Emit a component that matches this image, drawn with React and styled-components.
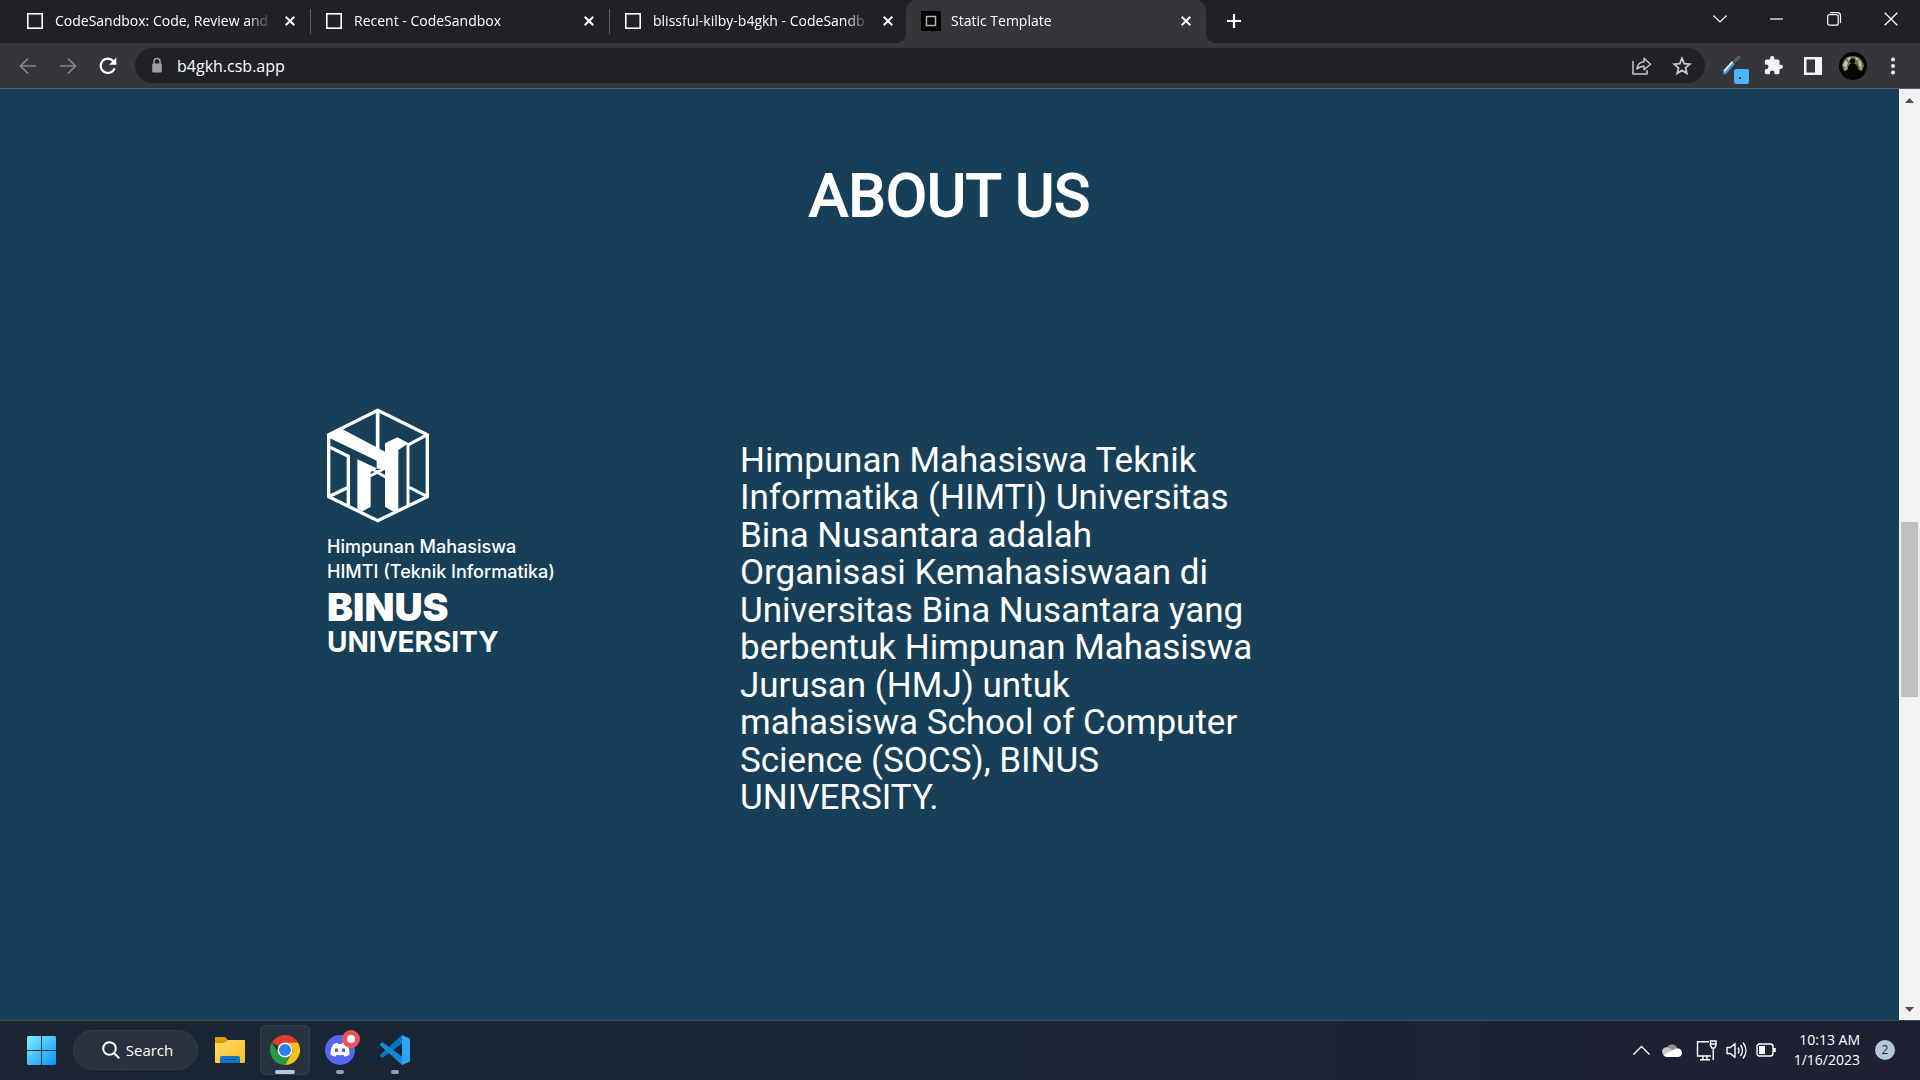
import React from "react";
import styled, { createGlobalStyle } from "styled-components";

const ui = `"Open Sans", "Noto Sans", sans-serif`;

const Global = createGlobalStyle`
  * { box-sizing: border-box; }
  body { margin: 0; overflow: hidden; background: #174058; }
  button { border: 0; padding: 0; background: none; color: inherit; font: inherit; }
  svg { display: block; flex: none; overflow: visible; }
`;

const Screen = styled.div`
  display: flex;
  flex-direction: column;
  height: 100vh;
  color: #fff;
  font-family: ${ui};
`;

/* ---------- browser frame ---------- */

const TabStrip = styled.header`
  display: flex;
  height: 43px;
  padding: 0 1px 0 12px;
  background: #202124;
`;

const Tabs = styled.nav`
  display: flex;
`;

const Tab = styled.div`
  position: relative;
  display: flex;
  align-items: center;
  gap: ${(p) => (p.$active ? "10px" : "12px")};
  width: ${(p) => (p.$active ? "300px" : "298px")};
  margin-left: ${(p) => (p.$active ? "-2px" : "0")};
  padding: 0 14px 2px 15px;
  border-radius: 10px 10px 0 0;
  background: ${(p) => (p.$active ? "#35363a" : "transparent")};

  &::before, &::after {
    content: "";
    display: ${(p) => (p.$active ? "block" : "none")};
    position: absolute;
    bottom: 0;
    width: 10px;
    height: 10px;
  }
  &::before { left: -10px; background: radial-gradient(circle at 0 0, transparent 10px, #35363a 10px); }
  &::after { right: -10px; background: radial-gradient(circle at 100% 0, transparent 10px, #35363a 10px); }
`;

const TabDivider = styled.i`
  width: 1px;
  height: 25px;
  margin-top: 9px;
  background: #5f6064;
`;

const TabLabel = styled.button`
  flex: 1;
  min-width: 0;
  white-space: nowrap;
  text-align: left;
  font-size: 14px;
  line-height: 20px;
  mask-image: linear-gradient(to left, transparent 0, #000 24px);
`;

const IconButton = styled.button`
  display: flex;
  flex: none;
  align-items: center;
  justify-content: center;
  width: ${(p) => p.$w || 40}px;
  height: ${(p) => p.$h || 40}px;
  color: ${(p) => p.$color || "#fff"};
`;

const WindowControls = styled.div`
  display: flex;
  margin-left: auto;
`;

const Toolbar = styled.div`
  display: flex;
  align-items: center;
  height: 46px;
  padding: 0 7px 0 8px;
  background: #35363a;
  border-bottom: 1px solid #5c5d61;
`;

const AddressBar = styled.form`
  display: flex;
  flex: 1;
  align-items: center;
  height: 35px;
  margin: 0 8px 0 7px;
  padding: 0 3px 0 14px;
  border-radius: 18px;
  background: #202124;
`;

const AddressInput = styled.input`
  flex: 1;
  min-width: 0;
  margin-left: 12px;
  padding: 0;
  border: 0;
  outline: 0;
  background: none;
  color: #fff;
  font: 16px/24px ${ui};
`;

const Viewport = styled.div`
  display: flex;
  flex: 1;
  min-height: 0;
`;

const ScrollTrack = styled.div`
  display: flex;
  flex-direction: column;
  align-items: center;
  width: 21px;
  background: #f1f1f1;
`;

const ScrollSpace = styled.span`
  flex: ${(p) => p.$grow};
`;

const ScrollThumb = styled.span`
  width: 17px;
  height: 175px;
  background: #c1c1c1;
`;

/* ---------- page ---------- */

const Page = styled.main`
  display: flex;
  flex: 1;
  flex-direction: column;
  background: #174058;
  font-family: Roboto, sans-serif;
`;

const Title = styled.h1`
  margin: 69px 0 0;
  text-align: center;
  font-size: 60px;
  line-height: 75px;
  font-weight: 400;
  -webkit-text-stroke: 2px #fff;
`;

const About = styled.section`
  display: flex;
  align-items: flex-start;
  margin-top: 175px;
  padding-left: 327px;
`;

const LogoBlock = styled.figure`
  display: flex;
  flex-direction: column;
  width: 413px;
  margin: 0;
  font-family: Inter, sans-serif;
`;

const LogoLine = styled.span`
  margin-top: ${(p) => p.$gap || 0}px;
  font-size: ${(p) => p.$size}px;
  line-height: ${(p) => p.$line}px;
  font-weight: ${(p) => p.$weight || 400};
`;

const Description = styled.p`
  width: 514px;
  margin: 34px 0 0;
  font-size: 35px;
  line-height: 1.07;
`;

/* ---------- taskbar ---------- */

const Taskbar = styled.footer`
  display: flex;
  align-items: center;
  height: 60px;
  padding: 0 25px 1px 14px;
  border-top: 1px solid #41474f;
  background: linear-gradient(90deg, #1c2433 0%, #182534 16%, #1a2536 50%, #1d2134 80%, #1e2133 100%);
`;

const SearchButton = styled.button`
  display: flex;
  align-items: center;
  justify-content: center;
  gap: 6px;
  width: 125px;
  height: 40px;
  margin: 0 7px 0 4px;
  padding-left: 4px;
  border: 1px solid #333c48;
  border-radius: 20px;
  background: #29313d;
  font-size: 15px;
`;

const AppButton = styled.button`
  position: relative;
  display: flex;
  align-items: center;
  justify-content: center;
  width: 50px;
  height: 50px;
  margin-right: 5px;
  border-radius: 5px;
  border: 1px solid ${(p) => (p.$active ? "#343f4c" : "transparent")};
  background: ${(p) => (p.$active ? "#27323f" : "transparent")};

  &::after {
    content: "";
    position: absolute;
    bottom: 0;
    width: ${(p) => (p.$active ? 20 : p.$open ? 8 : 0)}px;
    height: 4px;
    border-radius: 2px;
    background: ${(p) => (p.$active ? "#b3c8dd" : "#9a9da2")};
  }
`;

const Tray = styled.div`
  display: flex;
  align-items: center;
  margin-left: auto;
`;

const TrayGroup = styled.div`
  display: flex;
  margin-left: 5px;
`;

const Clock = styled.button`
  margin: 0 15px 0 12px;
  text-align: right;
  font-size: 14px;
  line-height: 20px;
`;

const Count = styled.span`
  width: 20px;
  height: 20px;
  border-radius: 50%;
  background: #b4c8dc;
  color: #1d2134;
  text-align: center;
  font-size: 12px;
  line-height: 20px;
`;

/* ---------- icons ---------- */

const Line = ({ w, h = w, sw = 1.5, children, ...rest }) => (
  <svg width={w} height={h} viewBox={`0 0 ${w} ${h}`} fill="none" stroke="currentColor" strokeWidth={sw} {...rest}>
    {children}
  </svg>
);

const BoxFavicon = () => (
  <Line w={16} sw={1.6}><rect x="0.8" y="0.8" width="14.4" height="14.4" /></Line>
);

const TemplateFavicon = () => (
  <svg width="20" height="20">
    <rect width="20" height="20" fill="#000" />
    <rect x="5.5" y="5.5" width="9" height="9" fill="none" stroke="#b5b5b5" strokeWidth="1.5" />
  </svg>
);

const SmallCross = () => (
  <Line w={10} sw={2}><path d="M.7.7l8.6 8.6M9.3.7L.7 9.3" /></Line>
);

const Arrow = ({ flip }) => (
  <Line w={18} sw={1.7}>
    <path d={flip ? "M1 9h15M9 1.500L16.500 9 9 16.500" : "M17 9H2M9 1.500L1.500 9 9 16.500"} />
  </Line>
);

const Reload = () => (
  <Line w={20} sw={2.2}>
    <path d="M16.6 12.3A7.2 7.2 0 1 1 15.2 5" />
    <path d="M18.3 1.6v7.2h-7.2z" fill="currentColor" stroke="none" />
  </Line>
);

const Lock = () => (
  <svg width="16" height="18" viewBox="0 0 16 18">
    <path d="M5 7V4.600a3 3 0 0 1 6 0V7" fill="none" stroke="#9aa0a6" strokeWidth="1.500" />
    <rect x="3.200" y="6.500" width="9.600" height="9" rx="1.200" fill="#9aa0a6" />
  </svg>
);

const Share = () => (
  <Line w={20} sw={1.5}>
    <path d="M1 5v13h14v-4" />
    <path d="M5 13c.5-5 3-7 7-7.300V2.300L18.500 8.200 12 13.800v-3.600c-3 0-5 .8-7 2.800z" strokeLinejoin="round" />
  </Line>
);

const Star = () => (
  <Line w={20} sw={1.8}>
    <path d="M10 2.400l2.200 5.200 5.600.5-4.300 3.700 1.300 5.500L10 14.400l-4.800 2.900 1.300-5.500-4.300-3.700 5.600-.5z" />
  </Line>
);

const Dropper = () => (
  <svg width="28" height="28" viewBox="0 0 28 28">
    <path d="M4.500 18.500L13 9l3 3-8.500 9.500-3.500 1z" fill="#3f9fdc" />
    <path d="M4.500 18.500L13 9l1.300 1.300L5.600 20z" fill="#e8eef2" />
    <path d="M13 7l5 5" stroke="#2f2c2a" strokeWidth="2.400" strokeLinecap="round" />
    <path d="M16 9l4-4" stroke="#5e5a57" strokeWidth="3.200" strokeLinecap="round" />
    <rect x="15" y="17" width="15" height="15" rx="2" fill="#4db5ff" />
    <rect x="20" y="25" width="2" height="2" fill="#1c2a36" />
  </svg>
);

const Puzzle = () => (
  <svg width="19" height="19" viewBox="1 1 22 22" fill="#f1f3f4">
    <path d="M20.500 11H19V7a2 2 0 0 0-2-2h-4V3.500a2.500 2.500 0 0 0-5 0V5H4a2 2 0 0 0-2 2v3.800h1.500a2.700 2.700 0 0 1 0 5.400H2V20a2 2 0 0 0 2 2h3.800v-1.500a2.700 2.700 0 0 1 5.400 0V22H17a2 2 0 0 0 2-2v-4h1.500a2.500 2.500 0 0 0 0-5z" />
  </svg>
);

const SidePanel = () => (
  <svg width="18" height="18">
    <rect width="18" height="18" fill="#f1f3f4" />
    <rect x="2.500" y="2.500" width="8.500" height="13" fill="#35363a" />
  </svg>
);

const Avatar = () => (
  <svg width="28" height="28" viewBox="0 0 28 28">
    <circle cx="14" cy="14" r="14" fill="#050605" />
    <path d="M3 14C4 7 8 4 14 4s10 4 11 10l-2 5-5-2-8 0-5 2z" fill="#66744c" />
    <path d="M4 13l3-5 2 3-2 5zM19 7l3 3 1 6-3-2zM8 6l4-1-2 4zM16 5l3 1-1 3z" fill="#c3cda9" />
    <path d="M5 16l3-2 1 3-3 2zM20 15l3 1-1 3z" fill="#98a67a" />
    <circle cx="13.500" cy="9" r="2.600" fill="#050605" />
    <path d="M9 15q1-3 3-3.500h3q3 .5 4 3.500l1 10H8z" fill="#050605" />
  </svg>
);

const Triangle = ({ down }) => (
  <svg width="21" height="21" viewBox="0 0 21 21">
    <path d={down ? "M6 8h9l-4.500 5z" : "M6 14h9l-4.500-5z"} fill="#505050" />
  </svg>
);

const HimtiMark = () => (
  <svg width="103" height="116" viewBox="51 54 309 348" fill="none" stroke="#fff" strokeWidth="10">
    <path d="M203 61L352 134V320L203 392 56 320V134z" />
    <path d="M203 61V190" strokeWidth="11" />
    <path d="M60 172L115 199V345M56 320L112 293" />
    <path d="M294 165V345M352 134L292 166M352 320L298 292" strokeWidth="9" />
    <path d="M56 132L98 118 225 185V160L262 142 296 160 265 180V364L248 364 225 350V236H200V212L60 145z" fill="#fff" stroke="none" />
    <path d="M142 208L200 235 182 246V350L158 364 142 358z" fill="#fff" stroke="none" />
    <path d="M180 258L226 234M184 236L228 262" strokeWidth="9" />
  </svg>
);

const WindowsLogo = () => (
  <svg width="30" height="30" viewBox="0 0 30 30">
    <defs>
      <linearGradient id="win" x1="0" y1="0" x2="1" y2="1">
        <stop offset="0" stopColor="#7df0ff" />
        <stop offset="1" stopColor="#0a94f8" />
      </linearGradient>
    </defs>
    <path d="M1 1h13v14H0V2zM15 1h13l1 1v13H15zM0 16h14v14H1l-1-1zM15 16h14v13l-1 1H15z" fill="url(#win)" />
  </svg>
);

const Folder = () => (
  <svg width="30" height="26" viewBox="0 0 30 26">
    <defs>
      <linearGradient id="folder" x1="0" y1="0" x2="1" y2="1">
        <stop offset="0" stopColor="#ffdc6e" />
        <stop offset="1" stopColor="#fbbd1c" />
      </linearGradient>
    </defs>
    <path d="M0 1q0-1 1-1h8q2 0 3 2l1 2H0z" fill="#e09f10" />
    <path d="M0 6q5 0 9-1l4-2h16q1 0 1 1v21q0 1-1 1H1q-1 0-1-1z" fill="url(#folder)" />
    <path d="M0 2h12l1 1.500L9 6H0z" fill="#dd9c0c" />
    <path d="M5 26v-5q0-2 2-2h16q2 0 2 2v5z" fill="#1474c8" />
    <path d="M9 22.500h12" stroke="#0b4f92" strokeWidth="1.200" strokeLinecap="round" />
  </svg>
);

const Chrome = () => (
  <svg width="30" height="30" viewBox="0 0 30 30">
    <path d="M2 7.500A15 15 0 0 1 28 7.500H15A7.500 7.500 0 0 0 8.500 11.250z" fill="#e33b2e" />
    <path d="M28 7.500A15 15 0 0 1 15 30l6.500-11.250A7.500 7.500 0 0 0 15 7.500z" fill="#fdc21a" />
    <path d="M15 30A15 15 0 0 1 2 7.500l6.500 11.250A7.500 7.500 0 0 0 21.500 18.750z" fill="#249a45" />
    <circle cx="15" cy="15" r="7.500" fill="#fff" />
    <circle cx="15" cy="15" r="6" fill="#2f7de9" />
  </svg>
);

const Discord = () => (
  <svg width="30" height="30" viewBox="0 0 30 30">
    <circle cx="15" cy="15" r="15" fill="#5865f2" />
    <path d="M8.500 9q2-1 4.200-1.300l.6 1.200h3.400l.6-1.200q2.200.3 4.200 1.300 3.500 5 3 10.500-2.500 1.800-5 2.300l-1.200-2q-3.300.8-6.600 0l-1.200 2q-2.500-.5-5-2.300-.5-5.500 3-10.500z" fill="#fff" />
    <ellipse cx="11.500" cy="15.300" rx="1.800" ry="2" fill="#5865f2" />
    <ellipse cx="18.500" cy="15.300" rx="1.800" ry="2" fill="#5865f2" />
    <circle cx="26" cy="4" r="9" fill="#f05257" />
    <circle cx="26" cy="4" r="4" fill="#fff" />
  </svg>
);

const VsCode = () => (
  <svg width="30" height="30" viewBox="0 0 30 30">
    <path d="M22 0v8.500L3 22.500q-1 .5-1.800-.2L.4 21.300q-.8-1 0-1.700z" fill="#0a74bd" />
    <path d="M22 30v-8.500L3 7.500q-1-.5-1.800.2L.4 8.700q-.8 1 0 1.700z" fill="#1389d2" />
    <path d="M22 0l7 3.200q1 .5 1 1.500v20.600q0 1-1 1.500L22 30z" fill="#2aa7f2" />
  </svg>
);

const Cloud = () => (
  <svg width="20" height="14" viewBox="0 0 20 14">
    <path d="M5 5a5.500 5.500 0 0 1 10.500 1L10 9z" fill="#8f9299" />
    <path d="M0 9a4.500 4.500 0 0 1 7-4l6 4-11 4z" fill="#c9cacd" />
    <path d="M1.500 12L12 6.500a5 5 0 0 1 4-1 4.300 4.300 0 0 1 .5 8.500H4.500a4 4 0 0 1-3-2z" fill="#fff" />
  </svg>
);

const Network = () => (
  <Line w={21} sw={1.400}>
    <path d="M13 1.700H1.500v14.300H15M4 19.700h10M7 16v4M11 16v4" />
    <path d="M14.500 1h5.500v4.500l-1.500 2.500h-2.500L14.500 5.500zM14.500 4h5.500M17.250 8v12" />
  </Line>
);

const Speaker = () => (
  <Line w={21} sw={1.400}>
    <path d="M1 7.500h3.500L9 3.500v14l-4.500-4H1z" strokeLinejoin="round" />
    <path d="M12 7.500q2 3 0 6M14.500 5q4 5.500 0 11M17 2.500q6 8 0 16" />
  </Line>
);

const Battery = () => (
  <Line w={21} h={14} sw={1.400}>
    <rect x="1" y="1" width="16" height="12" rx="2.500" />
    <rect x="3" y="3" width="6" height="8" fill="currentColor" stroke="none" />
    <path d="M18.500 5v4" strokeWidth="2.500" />
  </Line>
);

const tabs = [
  { title: "CodeSandbox: Code, Review and" },
  { title: "Recent - CodeSandbox" },
  { title: "blissful-kilby-b4gkh - CodeSandb" },
  { title: "Static Template", active: true },
];

export default function App() {
  return (
    <Screen>
      <Global />
      <TabStrip>
        <Tabs aria-label="Tabs">
          {tabs.map((t, i) => (
            <React.Fragment key={t.title}>
              <Tab $active={t.active}>
                {t.active ? <TemplateFavicon /> : <BoxFavicon />}
                <TabLabel>{t.title}</TabLabel>
                <IconButton $w={12} $h={20} aria-label="Close tab"><SmallCross /></IconButton>
              </Tab>
              {i < 2 && <TabDivider />}
            </React.Fragment>
          ))}
        </Tabs>
        <IconButton $w={56} $h={42} aria-label="New tab"><Line w={16} sw={2.2}><path d="M8 1v14M1 8h14" /></Line></IconButton>
        <WindowControls>
          <IconButton $w={57} $h={37} aria-label="Search tabs"><Line w={14} h={8} sw={1.2}><path d="M.5.5L7 7 13.500.5" /></Line></IconButton>
          <IconButton $w={57} $h={37} aria-label="Minimize"><Line w={13} h={2} sw={1.2}><path d="M0 1h13" /></Line></IconButton>
          <IconButton $w={57} $h={37} aria-label="Restore"><Line w={14} sw={1.2}><rect x=".7" y="2.700" width="10.500" height="10.500" rx="2" /><path d="M3 .7h7.500a3 3 0 0 1 3 3V11" /></Line></IconButton>
          <IconButton $w={57} $h={37} aria-label="Close"><Line w={14} sw={1.300}><path d="M.7.7l12.600 12.600M13.300.7L.7 13.300" /></Line></IconButton>
        </WindowControls>
      </TabStrip>
      <Toolbar>
        <IconButton $color="#85878b" aria-label="Back"><Arrow /></IconButton>
        <IconButton $color="#85878b" aria-label="Forward"><Arrow flip /></IconButton>
        <IconButton aria-label="Reload"><Reload /></IconButton>
        <AddressBar>
          <Lock />
          <AddressInput aria-label="Address" defaultValue="b4gkh.csb.app" />
          <IconButton type="button" $color="#c4c6c9" aria-label="Share"><Share /></IconButton>
          <IconButton type="button" $color="#c4c6c9" aria-label="Bookmark"><Star /></IconButton>
        </AddressBar>
        <IconButton aria-label="Color picker"><Dropper /></IconButton>
        <IconButton aria-label="Extensions"><Puzzle /></IconButton>
        <IconButton aria-label="Side panel"><SidePanel /></IconButton>
        <IconButton aria-label="Profile"><Avatar /></IconButton>
        <IconButton aria-label="Menu">
          <svg width="4" height="18" fill="#f1f3f4"><circle cx="2" cy="2.500" r="2" /><circle cx="2" cy="9" r="2" /><circle cx="2" cy="15.500" r="2" /></svg>
        </IconButton>
      </Toolbar>

      <Viewport>
        <Page>
          <Title>ABOUT US</Title>
          <About>
            <LogoBlock>
              <HimtiMark />
              <LogoLine $size={18} $line={25} $gap={10} $weight={500}>Himpunan Mahasiswa</LogoLine>
              <LogoLine $size={18} $line={25} $weight={500}>HIMTI (Teknik Informatika)</LogoLine>
              <LogoLine $size={39} $line={45} $weight={900}>BINUS</LogoLine>
              <LogoLine $size={28} $line={27} $weight={700}>UNIVERSITY</LogoLine>
            </LogoBlock>
            <Description>
              Himpunan Mahasiswa Teknik Informatika (HIMTI) Universitas Bina Nusantara adalah Organisasi
              Kemahasiswaan di Universitas Bina Nusantara yang berbentuk Himpunan Mahasiswa Jurusan (HMJ) untuk
              mahasiswa School of Computer Science (SOCS), BINUS UNIVERSITY.
            </Description>
          </About>
        </Page>
        <ScrollTrack>
          <Triangle />
          <ScrollSpace $grow={412} />
          <ScrollThumb />
          <ScrollSpace $grow={302} />
          <Triangle down />
        </ScrollTrack>
      </Viewport>

      <Taskbar>
        <IconButton $w={55} $h={50} aria-label="Start"><WindowsLogo /></IconButton>
        <SearchButton>
          <Line w={18} sw={2}><circle cx="7.500" cy="7.500" r="6.300" /><path d="M12 12l5.200 5.200" /></Line>
          Search
        </SearchButton>
        <AppButton aria-label="File Explorer"><Folder /></AppButton>
        <AppButton $active aria-label="Chrome"><Chrome /></AppButton>
        <AppButton $open aria-label="Discord"><Discord /></AppButton>
        <AppButton $open aria-label="Visual Studio Code"><VsCode /></AppButton>
        <Tray>
          <IconButton $w={30} aria-label="Show hidden icons"><Line w={17} h={9} sw={1.300}><path d="M.5 8.500l8-8 8 8" /></Line></IconButton>
          <IconButton $w={30} aria-label="OneDrive"><Cloud /></IconButton>
          <TrayGroup>
            <IconButton $w={30} aria-label="Network"><Network /></IconButton>
            <IconButton $w={30} aria-label="Volume"><Speaker /></IconButton>
            <IconButton $w={30} aria-label="Battery"><Battery /></IconButton>
          </TrayGroup>
          <Clock>10:13 AM<br />1/16/2023</Clock>
          <Count>2</Count>
        </Tray>
      </Taskbar>
    </Screen>
  );
}
